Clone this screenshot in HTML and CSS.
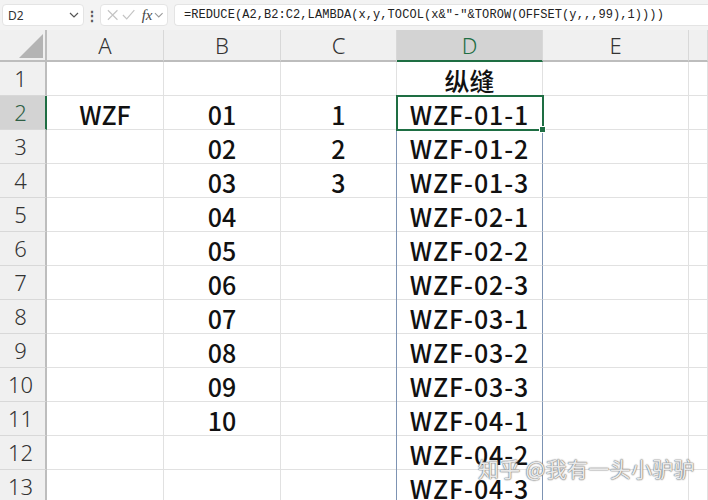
FILE: index.html
```html
<!DOCTYPE html>
<html lang="zh">
<head>
  <meta charset="UTF-8">
  <title>纵缝</title>
  <link rel="stylesheet" href="styles.css">
</head>
<body>

<div class="formula-bar">
  <div class="name-box">
    <span>D2</span>
    <svg class="chev" width="10" height="6" viewBox="0 0 10 6"><path d="M1 1l4 4 4-4" fill="none" stroke="#555" stroke-width="1.2"/></svg>
  </div>
  <div class="dots">&#8942;</div>
  <div class="fx-box">
    <svg width="14" height="14" viewBox="0 0 14 14"><path d="M2 2l10 10M12 2L2 12" stroke="#c4c4c4" stroke-width="1.2"/></svg>
    <svg width="16" height="14" viewBox="0 0 16 14"><path d="M2 7l4 4 8-9" fill="none" stroke="#c4c4c4" stroke-width="1.2"/></svg>
    <span class="fx">fx</span>
    <svg width="10" height="6" viewBox="0 0 10 6"><path d="M1 1l4 4 4-4" fill="none" stroke="#999" stroke-width="1.1"/></svg>
  </div>
  <div class="formula">=REDUCE(A2,B2:C2,LAMBDA(x,y,TOCOL(x&amp;"-"&amp;TOROW(OFFSET(y,,,99),1))))</div>
</div>

<div class="sheet" id="sheet"></div>

<div class="watermark">知乎 @我有一头小驴驴</div>

<script>
  // datos de la hoja: columnas A-C y el resultado derramado en D
  var cols = ['A', 'B', 'C', 'D', 'E', ''];
  var datos = {
    'A2': 'WZF',
    'D1': '纵缝'
  };
  var nums = ['01', '02', '03', '04', '05', '06', '07', '08', '09', '10'];
  nums.forEach(function(n, i) { datos['B' + (i + 2)] = n; });
  ['1', '2', '3'].forEach(function(n, i) { datos['C' + (i + 2)] = n; });

  // resultado de REDUCE: 4 grupos x 3
  var fila = 2;
  for (var b = 1; b <= 4; b++) {
    for (var c = 1; c <= 3; c++) {
      datos['D' + fila] = 'WZF-0' + b + '-' + c;
      fila++;
    }
  }

  var html = '<div class="corner"><span class="tri"></span></div>';
  cols.forEach(function(col) {
    html += '<div class="col-head' + (col === 'D' ? ' sel' : '') + '">' + col + '</div>';
  });

  for (var r = 1; r <= 13; r++) {
    html += '<div class="row-head' + (r === 2 ? ' sel' : '') + '">' + r + '</div>';
    cols.forEach(function(col) {
      var clase = 'cell';
      if (col === 'D' && r >= 2) clase += ' spill';
      if (col === 'D' && r === 2) clase += ' active';
      var txt = datos[col + r] || '';
      html += '<div class="' + clase + '">' + txt + '</div>';
    });
  }

  document.getElementById('sheet').innerHTML = html;
</script>
</body>
</html>
```

FILE: styles.css
```css
body {
  margin: 0;
  padding: 0;
  background-color: #fff;
  overflow: hidden;
  width: 708px;
  height: 500px;
  position: relative;
}
/* barra de fórmulas */
.formula-bar {
  height: 30px;
  display: flex;
  align-items: center;
  padding: 0 0 0 2px;
  background-color: #f3f3f3;
  box-sizing: border-box;
  font-family: "Noto Sans", sans-serif;
}
.name-box {
  width: 82px;
  height: 22px;
  box-sizing: border-box;
  background-color: #fff;
  border: 1px solid #e4e4e4;
  border-radius: 4px;
  display: flex;
  align-items: center;
  justify-content: space-between;
  padding: 0 4px 0 5px;
  font-size: 12px;
  color: #333;
}
.dots {
  width: 16px;
  text-align: center;
  font-size: 14px;
  color: #555;
  font-weight: bold;
}
.fx-box {
  width: 68px;
  height: 22px;
  box-sizing: border-box;
  background-color: #fff;
  border: 1px solid #e4e4e4;
  border-radius: 4px;
  display: flex;
  align-items: center;
  gap: 2px;
  padding: 0 3px 0 5px;
}
.fx {
  font-family: "Liberation Serif", serif;
  font-style: italic;
  font-size: 15px;
  color: #444;
  margin-left: 3px;
}
.formula {
  flex: 1;
  height: 22px;
  margin-left: 6px;
  box-sizing: border-box;
  background-color: #fff;
  border: 1px solid #e4e4e4;
  border-radius: 4px 0 0 4px;
  border-right: none;
  padding-left: 9px;
  font-family: "Liberation Mono", monospace;
  font-size: 12px;
  letter-spacing: 0.07px;
  line-height: 20px;
  color: #222;
  white-space: nowrap;
}
/* hoja de cálculo */
.sheet {
  display: grid;
  grid-template-columns: 47px 117px 117px 116px 146px 146px 1fr;
  grid-template-rows: 32px repeat(13, 34px);
}
.corner {
  background-color: #f0f0f0;
  border-right: 2px solid #bdbdbd;
  border-bottom: 2px solid #bdbdbd;
  box-sizing: border-box;
  position: relative;
}
.tri {
  position: absolute;
  right: 2px;
  bottom: 2px;
  width: 0;
  height: 0;
  border-left: 24px solid transparent;
  border-bottom: 24px solid #b4b4b4;
}
.col-head {
  background-color: #f0f0f0;
  border-right: 1px solid #d8d8d8;
  border-bottom: 2px solid #bdbdbd;
  box-sizing: border-box;
  text-align: center;
  font-family: "Noto Sans", sans-serif;
  font-weight: 300;
  font-size: 22px;
  line-height: 31px;
  color: #333;
}
.col-head.sel {
  background-color: #d3d3d3;
  border-bottom-color: #1e6e43;
  color: #1e6e43;
}
.row-head {
  background-color: #f0f0f0;
  border-right: 2px solid #bdbdbd;
  border-bottom: 1px solid #d8d8d8;
  box-sizing: border-box;
  text-align: center;
  padding-right: 4px;
  font-family: "Noto Sans", sans-serif;
  font-weight: 300;
  font-size: 22px;
  line-height: 33px;
  color: #333;
}
.row-head.sel {
  background-color: #d3d3d3;
  border-right-color: #1e6e43;
  color: #2f5f45;
}
.cell {
  border-right: 1px solid #e1e1e1;
  border-bottom: 1px solid #e1e1e1;
  box-sizing: border-box;
  text-align: center;
  font-family: "Noto Sans CJK SC", sans-serif;
  font-weight: 500;
  font-size: 25px;
  line-height: 36px;
  color: #111;
  white-space: nowrap;
}
.cell.spill {
  border-right-color: #7d93b3;
  box-shadow: -1px 0 0 #7d93b3;
  letter-spacing: 0.9px;
}
.cell.active {
  position: relative;
  outline: 2px solid #1e6e43;
  outline-offset: -1px;
  z-index: 2;
}
.cell.active::after {
  content: "";
  position: absolute;
  right: -4px;
  bottom: -4px;
  width: 5px;
  height: 5px;
  background-color: #1e6e43;
  border: 1px solid #fff;
}
/* marca de agua */
.watermark {
  position: absolute;
  left: 478px;
  top: 453px;
  font-family: "Noto Sans CJK SC", sans-serif;
  font-size: 21px;
  letter-spacing: 0.3px;
  color: rgba(255, 255, 255, 0.85);
  text-shadow: 0 0 1px #777, 0 0 1px #777, 0 0 2px #999;
  white-space: nowrap;
}
```
